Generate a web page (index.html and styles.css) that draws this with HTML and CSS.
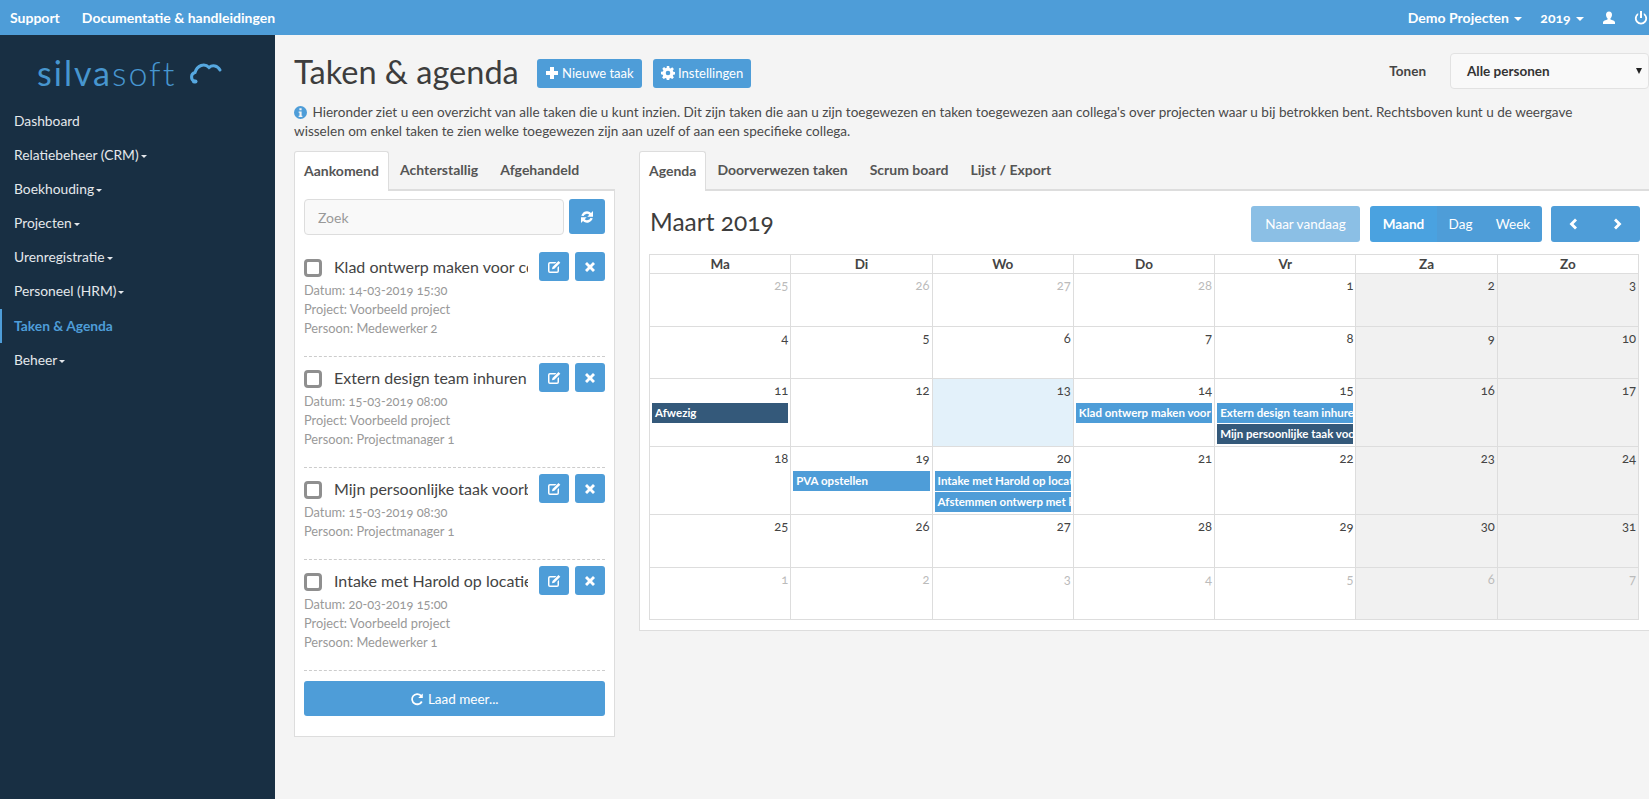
FILE: index.html
```html
<!DOCTYPE html>
<html lang="nl">
<head>
    <meta charset="UTF-8">
    <meta name="viewport" content="width=device-width, initial-scale=1.0">
    <title>Taken &amp; agenda</title>
    <link rel="stylesheet" href="styles.css">
</head>
<body>
    <svg class="defs" width="0" height="0">
        <symbol id="i-plus" viewBox="0 0 14 14"><path d="M5 1h4v4h4v4H9v4H5V9H1V5h4z"/></symbol>
        <symbol id="i-cog" viewBox="0 0 14 14"><path fill-rule="evenodd" d="M5.800 0h2.400l.3 1.900 1.100.5L11.200 1.300l1.700 1.700-1.100 1.600.5 1.100 1.900.3v2.400l-1.900.3-.5 1.100 1.100 1.600-1.700 1.700-1.600-1.100-1.100.5-.3 1.900H5.800l-.3-1.900-1.100-.5-1.600 1.100-1.700-1.700 1.100-1.600-.5-1.100L0 8.200V5.800l1.900-.3.5-1.100L1.300 2.800 3 1.100l1.600 1.100 1.100-.5zM7 4.700a2.300 2.300 0 1 0 0 4.600 2.300 2.300 0 0 0 0-4.600z"/></symbol>
        <symbol id="i-refresh" viewBox="0 0 14 14"><path d="M1.300 5.800A5.900 5.900 0 0 1 11 2.900L13 1v5.700H7.300L9.300 4.700A3.600 3.600 0 0 0 3.600 6zM12.700 8.200A5.900 5.900 0 0 1 3 11.100L1 13V7.300H6.700L4.700 9.300A3.600 3.600 0 0 0 10.400 8z"/></symbol>
        <symbol id="i-repeat" viewBox="0 0 14 14"><path d="M12.800 1.400v4.500H8.300l1.800-1.800A4.200 4.200 0 1 0 11 8.900l1.600 1A6 6 0 1 1 11.400 2.800z"/></symbol>
        <symbol id="i-edit" viewBox="0 0 14 14"><path fill-rule="evenodd" d="M3 2h6.500L8 3.500H3a.5.5 0 0 0-.5.5v7a.5.5 0 0 0 .5.5h7a.5.5 0 0 0 .5-.5V7.500L12 6v5a2 2 0 0 1-2 2H3a2 2 0 0 1-2-2V4a2 2 0 0 1 2-2z"/><path d="M11.500 1l1.800 1.800-6 6L5 9.300l.5-2.300z"/></symbol>
        <symbol id="i-remove" viewBox="0 0 14 14"><path d="M4 2l3 3 3-3 2 2-3 3 3 3-2 2-3-3-3 3-2-2 3-3-3-3z"/></symbol>
        <symbol id="i-info" viewBox="0 0 14 14"><path fill-rule="evenodd" d="M7 0a7 7 0 1 1 0 14A7 7 0 0 1 7 0zM5.800 2.300v2.200h2.400V2.300zM5 6v1.300h.9v3.200H5v1.300h4v-1.300h-.8V6z"/></symbol>
        <symbol id="i-user" viewBox="0 0 14 14"><path d="M7 .5c2 0 3 1.400 3 3.200 0 1.500-.7 2.900-1.500 3.500v1.300c1.700.6 4.500 1.300 4.500 2.700v1.800H1v-1.800c0-1.400 2.800-2.100 4.500-2.700V7.200C4.700 6.600 4 5.200 4 3.700 4 1.900 5 .5 7 .5z"/></symbol>
        <symbol id="i-off" viewBox="0 0 14 14"><path d="M6 0h2v7H6z"/><path d="M4.200 1.900v2.200a4.300 4.300 0 1 0 5.600 0V1.900a6.100 6.100 0 1 1-5.600 0z"/></symbol>
        <symbol id="i-left" viewBox="0 0 14 14"><path d="M9 1.500l2 2L7.500 7 11 10.500l-2 2L3.500 7z"/></symbol>
        <symbol id="i-right" viewBox="0 0 14 14"><path d="M5 1.500l-2 2L6.500 7 3 10.500l2 2L10.500 7z"/></symbol>
    </svg>

    <div class="topbar">
        <a href="#">Support</a>
        <a href="#">Documentatie &amp; handleidingen</a>
        <div class="topbar-right">
            <a href="#">Demo Projecten <span class="caret"></span></a>
            <a href="#">2019 <span class="caret"></span></a>
            <a href="#"><svg class="icon"><use href="#i-user"/></svg></a>
            <a href="#"><svg class="icon"><use href="#i-off"/></svg></a>
        </div>
    </div>

    <div class="layout">
        <div class="sidebar">
            <div class="logo">
                <span class="logo-text"><b>silva</b>soft</span>
                <svg class="logo-cloud" viewBox="0 0 34 22" fill="none">
                    <path d="M5.500 19.500C1.500 18 1.500 11.500 6 10.500 8 3.500 15.500 .5 20 5.500c3.500-3 8.500-2 11 2.500" stroke-width="3" stroke-linecap="round"/>
                    <path d="M5 19.500h1.500" stroke-width="4" stroke-linecap="round"/>
                </svg>
            </div>
            <a class="side-link" href="#">Dashboard</a>
            <a class="side-link" href="#">Relatiebeheer (CRM)<span class="caret"></span></a>
            <a class="side-link" href="#">Boekhouding<span class="caret"></span></a>
            <a class="side-link" href="#">Projecten<span class="caret"></span></a>
            <a class="side-link" href="#">Urenregistratie<span class="caret"></span></a>
            <a class="side-link" href="#">Personeel (HRM)<span class="caret"></span></a>
            <a class="side-link active" href="#">Taken &amp; Agenda</a>
            <a class="side-link" href="#">Beheer<span class="caret"></span></a>
        </div>

        <div class="main">
            <div class="page-head">
                <h1>Taken &amp; agenda</h1>
                <button class="btn"><svg class="icon"><use href="#i-plus"/></svg> Nieuwe taak</button>
                <button class="btn"><svg class="icon"><use href="#i-cog"/></svg> Instellingen</button>
                <label class="show-label">Tonen</label>
                <div class="select-box">Alle personen <span class="select-arrow"></span></div>
            </div>

            <p class="intro">
                <svg class="icon info-icon"><use href="#i-info"/></svg>
                Hieronder ziet u een overzicht van alle taken die u kunt inzien. Dit zijn taken die aan u zijn toegewezen en taken toegewezen aan collega's over projecten waar u bij betrokken bent. Rechtsboven kunt u de weergave<br>
                wisselen om enkel taken te zien welke toegewezen zijn aan uzelf of aan een specifieke collega.
            </p>

            <div class="columns">
                <div class="left-col">
                    <div class="tabs">
                        <a class="tab active" href="#">Aankomend</a>
                        <a class="tab" href="#">Achterstallig</a>
                        <a class="tab" href="#">Afgehandeld</a>
                    </div>
                    <div class="panel">
                        <div class="search-row">
                            <input class="search" type="text" placeholder="Zoek">
                            <button class="btn btn-square"><svg class="icon"><use href="#i-refresh"/></svg></button>
                        </div>

                        <div class="task">
                            <div class="task-top">
                                <span class="check"></span>
                                <span class="task-name">Klad ontwerp maken voor collega</span>
                                <button class="btn btn-small"><svg class="icon"><use href="#i-edit"/></svg></button>
                                <button class="btn btn-small"><svg class="icon"><use href="#i-remove"/></svg></button>
                            </div>
                            <div class="task-info">Datum: 14-03-2019 15:30</div>
                            <div class="task-info">Project: Voorbeeld project</div>
                            <div class="task-info">Persoon: Medewerker 2</div>
                        </div>

                        <div class="task">
                            <div class="task-top">
                                <span class="check"></span>
                                <span class="task-name">Extern design team inhuren voor</span>
                                <button class="btn btn-small"><svg class="icon"><use href="#i-edit"/></svg></button>
                                <button class="btn btn-small"><svg class="icon"><use href="#i-remove"/></svg></button>
                            </div>
                            <div class="task-info">Datum: 15-03-2019 08:00</div>
                            <div class="task-info">Project: Voorbeeld project</div>
                            <div class="task-info">Persoon: Projectmanager 1</div>
                        </div>

                        <div class="task">
                            <div class="task-top">
                                <span class="check"></span>
                                <span class="task-name">Mijn persoonlijke taak voorbeeld</span>
                                <button class="btn btn-small"><svg class="icon"><use href="#i-edit"/></svg></button>
                                <button class="btn btn-small"><svg class="icon"><use href="#i-remove"/></svg></button>
                            </div>
                            <div class="task-info">Datum: 15-03-2019 08:30</div>
                            <div class="task-info">Persoon: Projectmanager 1</div>
                        </div>

                        <div class="task">
                            <div class="task-top">
                                <span class="check"></span>
                                <span class="task-name">Intake met Harold op locatie bij</span>
                                <button class="btn btn-small"><svg class="icon"><use href="#i-edit"/></svg></button>
                                <button class="btn btn-small"><svg class="icon"><use href="#i-remove"/></svg></button>
                            </div>
                            <div class="task-info">Datum: 20-03-2019 15:00</div>
                            <div class="task-info">Project: Voorbeeld project</div>
                            <div class="task-info">Persoon: Medewerker 1</div>
                        </div>

                        <button class="btn btn-block"><svg class="icon"><use href="#i-repeat"/></svg> Laad meer...</button>
                    </div>
                </div>

                <div class="right-col">
                    <div class="tabs">
                        <a class="tab active" href="#">Agenda</a>
                        <a class="tab" href="#">Doorverwezen taken</a>
                        <a class="tab" href="#">Scrum board</a>
                        <a class="tab" href="#">Lijst / Export</a>
                    </div>
                    <div class="panel panel-cal">
                        <div class="cal-toolbar">
                            <h2>Maart 2019</h2>
                            <button class="btn btn-cal btn-faded">Naar vandaag</button>
                            <div class="btn-group">
                                <button class="btn btn-cal btn-month">Maand</button>
                                <button class="btn btn-cal btn-day">Dag</button>
                                <button class="btn btn-cal btn-week">Week</button>
                            </div>
                            <div class="btn-group">
                                <button class="btn btn-cal btn-nav"><svg class="icon"><use href="#i-left"/></svg></button>
                                <button class="btn btn-cal btn-nav"><svg class="icon"><use href="#i-right"/></svg></button>
                            </div>
                        </div>

                        <div class="calendar">
                            <div class="head">Ma</div><div class="head">Di</div><div class="head">Wo</div><div class="head">Do</div><div class="head">Vr</div><div class="head">Za</div><div class="head">Zo</div>

                            <div class="day other"><span class="num">25</span></div>
                            <div class="day other"><span class="num">26</span></div>
                            <div class="day other"><span class="num">27</span></div>
                            <div class="day other"><span class="num">28</span></div>
                            <div class="day"><span class="num">1</span></div>
                            <div class="day weekend"><span class="num">2</span></div>
                            <div class="day weekend"><span class="num">3</span></div>

                            <div class="day"><span class="num">4</span></div>
                            <div class="day"><span class="num">5</span></div>
                            <div class="day"><span class="num">6</span></div>
                            <div class="day"><span class="num">7</span></div>
                            <div class="day"><span class="num">8</span></div>
                            <div class="day weekend"><span class="num">9</span></div>
                            <div class="day weekend"><span class="num">10</span></div>

                            <div class="day"><span class="num">11</span><div class="event dark">Afwezig</div></div>
                            <div class="day"><span class="num">12</span></div>
                            <div class="day today"><span class="num">13</span></div>
                            <div class="day"><span class="num">14</span><div class="event">Klad ontwerp maken voor collega</div></div>
                            <div class="day"><span class="num">15</span><div class="event">Extern design team inhuren voor</div><div class="event dark">Mijn persoonlijke taak voorbeeld</div></div>
                            <div class="day weekend"><span class="num">16</span></div>
                            <div class="day weekend"><span class="num">17</span></div>

                            <div class="day"><span class="num">18</span></div>
                            <div class="day"><span class="num">19</span><div class="event">PVA opstellen</div></div>
                            <div class="day"><span class="num">20</span><div class="event">Intake met Harold op locatie bij</div><div class="event">Afstemmen ontwerp met klant</div></div>
                            <div class="day"><span class="num">21</span></div>
                            <div class="day"><span class="num">22</span></div>
                            <div class="day weekend"><span class="num">23</span></div>
                            <div class="day weekend"><span class="num">24</span></div>

                            <div class="day"><span class="num">25</span></div>
                            <div class="day"><span class="num">26</span></div>
                            <div class="day"><span class="num">27</span></div>
                            <div class="day"><span class="num">28</span></div>
                            <div class="day"><span class="num">29</span></div>
                            <div class="day weekend"><span class="num">30</span></div>
                            <div class="day weekend"><span class="num">31</span></div>

                            <div class="day other"><span class="num">1</span></div>
                            <div class="day other"><span class="num">2</span></div>
                            <div class="day other"><span class="num">3</span></div>
                            <div class="day other"><span class="num">4</span></div>
                            <div class="day other"><span class="num">5</span></div>
                            <div class="day weekend other"><span class="num">6</span></div>
                            <div class="day weekend other"><span class="num">7</span></div>
                        </div>
                    </div>
                </div>
            </div>
        </div>
    </div>
</body>
</html>
```

FILE: styles.css
```css
* {
    margin: 0;
    padding: 0;
    box-sizing: border-box;
}

html, body {
    height: 100%;
    overflow: hidden;
}

body {
    font-family: 'Lato', 'Open Sans', sans-serif;
    font-size: 14px;
    font-variant-numeric: oldstyle-nums;
    color: #444;
    background-color: #f4f4f4;
    display: flex;
    flex-direction: column;
}

a {
    text-decoration: none;
    color: inherit;
}

.defs {
    display: none;
}

.icon {
    width: 14px;
    height: 14px;
    fill: currentColor;
    vertical-align: -2px;
}

.caret {
    display: inline-block;
    width: 0;
    height: 0;
    margin-left: 3px;
    vertical-align: 2px;
    border-top: 4px solid currentColor;
    border-left: 4px solid transparent;
    border-right: 4px solid transparent;
}

/* top bar */
.topbar {
    flex: none;
    height: 35px;
    background-color: #4e9dd8;
    color: white;
    font-weight: 700;
    font-size: 14px;
    display: flex;
    align-items: center;
    padding-left: 10px;
    gap: 22px;
}

.topbar-right {
    margin-left: auto;
    display: flex;
    align-items: center;
    gap: 18px;
    padding-right: 1px;
}

.topbar-right .caret {
    margin-left: 2px;
}

.layout {
    flex: 1;
    display: flex;
    min-height: 0;
}

/* sidebar */
.sidebar {
    flex: none;
    width: 275px;
    background-color: #182f43;
    color: #e4e8ec;
}

.logo {
    height: 69px;
    display: flex;
    align-items: center;
    padding-left: 37px;
    padding-top: 6px;
    gap: 13px;
}

.logo-text {
    font-size: 34px;
    font-weight: 300;
    letter-spacing: 2px;
    color: #4796cf;
}

.logo-text b {
    font-weight: 400;
}

.logo-cloud {
    width: 34px;
    height: 22px;
    stroke: #56a8e0;
}

.side-link {
    display: block;
    height: 34.100px;
    line-height: 34.100px;
    padding-left: 14px;
    font-size: 13.800px;
}

.side-link .caret {
    border-top-width: 3.500px;
    border-left-width: 3.500px;
    border-right-width: 3.500px;
    margin-left: 2px;
}

.side-link.active {
    color: #4e9dd8;
    font-weight: 700;
    border-left: 2px solid #4e9dd8;
    padding-left: 12px;
}

/* main area */
.main {
    flex: 1;
    min-width: 0;
    padding: 18px 0 0 19px;
}

.page-head {
    display: flex;
    align-items: center;
    height: 36px;
}

h1 {
    font-size: 32.500px;
    font-weight: 400;
    color: #3d3d3d;
    margin-right: 18px;
}

.btn {
    background-color: #4e9dd8;
    color: white;
    border: none;
    border-radius: 3px;
    font-family: inherit;
    font-size: 13px;
    height: 29px;
    padding: 0 8px;
    margin-right: 11px;
}

.page-head .btn {
    margin-top: 4px;
}

.show-label {
    margin-left: auto;
    margin-right: 24px;
    font-weight: 700;
    font-size: 13.500px;
    color: #444;
}

.select-box {
    width: 199px;
    height: 36px;
    line-height: 34px;
    padding-left: 16px;
    background-color: #f9f9f9;
    border: 1px solid #e2e2e2;
    border-radius: 4px;
    font-weight: 700;
    font-size: 13.500px;
    color: #333;
    display: flex;
    justify-content: space-between;
    align-items: center;
}

.select-arrow {
    width: 0;
    height: 0;
    margin-right: 6px;
    border-top: 6px solid #222;
    border-left: 3px solid transparent;
    border-right: 3px solid transparent;
}

.intro {
    margin: 14px 0 10px;
    font-size: 13.550px;
    line-height: 19px;
    color: #4a4a4a;
    white-space: nowrap;
}

.info-icon {
    color: #4e9dd8;
    width: 13px;
    height: 13px;
    margin-right: 2px;
}

.columns {
    display: flex;
    align-items: flex-start;
    gap: 24px;
}

.left-col {
    flex: none;
    width: 321px;
}

.right-col {
    flex: 1;
    min-width: 0;
}

/* tabs */
.tabs {
    display: flex;
    height: 40px;
    border-bottom: 2px solid #ddd;
}

.tab {
    height: 38px;
    line-height: 37px;
    padding: 0 11px;
    font-size: 14px;
    font-weight: 700;
    color: #555;
}

.tab.active {
    height: 40px;
    padding: 0 9px;
    background-color: white;
    border: 1px solid #ddd;
    border-bottom: none;
    border-radius: 3px 3px 0 0;
}

.panel {
    background-color: white;
    border: 1px solid #ddd;
    border-top: none;
    padding: 8px 9px 20px;
}

.search-row {
    display: flex;
    gap: 5px;
    margin-bottom: 11px;
}

.search {
    flex: 1;
    min-width: 0;
    height: 36px;
    padding: 0 13px;
    font-family: inherit;
    font-size: 14px;
    background-color: #f9f9f9;
    border: 1px solid #ddd;
    border-radius: 4px;
}

.search::placeholder {
    color: #999;
}

.btn-square {
    width: 36px;
    height: 35px;
    padding: 0;
    margin: 0;
}

/* task list */
.task {
    padding-top: 6px;
    padding-bottom: 18px;
    border-bottom: 1px dashed #ccc;
}

.task-top {
    display: flex;
    align-items: center;
    height: 29px;
}

.check {
    flex: none;
    width: 18px;
    height: 18px;
    border: 3px solid #8f8f8f;
    border-radius: 4px;
    margin-right: 12px;
    margin-top: 2px;
}

.task-name {
    flex: 1;
    min-width: 0;
    overflow: hidden;
    white-space: nowrap;
    font-size: 16px;
    color: #444;
    margin-right: 11px;
    margin-top: -1px;
}

.btn-small {
    flex: none;
    width: 30px;
    padding: 0;
    margin: 0 0 0 6px;
}

.btn-small:first-of-type {
    margin-left: 0;
}

.task-info {
    font-size: 12.800px;
    line-height: 19px;
    color: #999;
}

.btn-block {
    display: block;
    width: 100%;
    height: 35px;
    margin: 10px 0 0;
    font-size: 13.500px;
}

/* calendar */
.panel-cal {
    border-right: none;
    padding: 15px 9px 10px;
}

.cal-toolbar {
    display: flex;
    align-items: center;
    height: 36px;
    margin-bottom: 12px;
}

h2 {
    font-size: 24.500px;
    font-weight: 400;
    color: #3d3d3d;
    margin-left: 1px;
    margin-right: auto;
    margin-bottom: 5px;
}

.btn-cal {
    height: 36px;
    font-size: 13.500px;
    padding: 0;
    margin: 0;
}

.btn-faded {
    width: 109px;
    opacity: 0.65;
    margin-right: 10px;
}

.btn-group {
    display: flex;
    margin-right: 9px;
}

.btn-group:last-child {
    margin-right: 0;
}

.btn-group .btn {
    border-radius: 0;
}

.btn-group .btn:first-child {
    border-radius: 3px 0 0 3px;
}

.btn-group .btn:last-child {
    border-radius: 0 3px 3px 0;
}

.btn-month {
    width: 67px;
    background-color: #4aa2e0;
    font-weight: 700;
}

.btn-day {
    width: 47px;
}

.btn-week {
    width: 58px;
}

.btn-nav {
    width: 44.500px;
}

.calendar {
    display: grid;
    grid-template-columns: repeat(7, 1fr);
    border-top: 1px solid #ddd;
    border-left: 1px solid #ddd;
    margin-right: 1px;
}

.head {
    height: 19px;
    line-height: 19px;
    text-align: center;
    font-size: 13.500px;
    font-weight: 700;
    color: #444;
    border-right: 1px solid #ddd;
    border-bottom: 1px solid #ddd;
}

.day {
    min-height: 52.500px;
    min-width: 0;
    border-right: 1px solid #ddd;
    border-bottom: 1px solid #ddd;
    padding: 0 2px 1px;
}

.num {
    display: block;
    height: 24px;
    line-height: 23px;
    text-align: right;
    font-size: 13px;
    color: #444;
}

.other .num {
    color: #bbb;
}

.weekend {
    background-color: #f1f1f1;
}

.today {
    background-color: #e3f1fa;
}

.event {
    height: 20px;
    line-height: 19px;
    margin-bottom: 1px;
    padding: 0 3px;
    background-color: #4e9dd8;
    color: white;
    font-size: 11.500px;
    font-weight: 700;
    white-space: nowrap;
    overflow: hidden;
}

.event.dark {
    background-color: #34597a;
}
```
